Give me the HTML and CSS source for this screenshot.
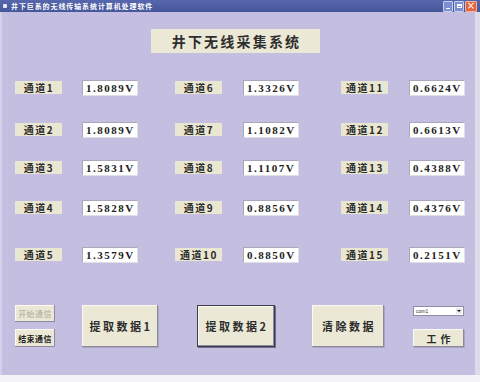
FILE: index.html
```html
<!DOCTYPE html>
<html lang="zh">
<head>
<meta charset="utf-8">
<link rel="stylesheet" href="styles.css">
</head>
<body>
<div class="window">
  <div class="titlebar">
    <span class="ticon"></span>
    <span class="ttext">井下巨系的无线传输系统计算机处理软件</span>
    <div class="wbtns">
      <span class="wb min"><span class="minbar"></span></span>
      <span class="wb max"><span class="maxbox"></span></span>
      <span class="wb close">×</span>
    </div>
  </div>
  <div class="client">
    <div class="heading">井下无线采集系统</div>
    <div class="grid">
      <div class="lbl">通道1</div><div class="val">1.8089V</div>
      <div class="lbl">通道6</div><div class="val">1.3326V</div>
      <div class="lbl">通道11</div><div class="val">0.6624V</div>

      <div class="lbl">通道2</div><div class="val">1.8089V</div>
      <div class="lbl">通道7</div><div class="val">1.1082V</div>
      <div class="lbl">通道12</div><div class="val">0.6613V</div>

      <div class="lbl">通道3</div><div class="val">1.5831V</div>
      <div class="lbl">通道8</div><div class="val">1.1107V</div>
      <div class="lbl">通道13</div><div class="val">0.4388V</div>

      <div class="lbl">通道4</div><div class="val">1.5828V</div>
      <div class="lbl">通道9</div><div class="val">0.8856V</div>
      <div class="lbl">通道14</div><div class="val">0.4376V</div>

      <div class="lbl">通道5</div><div class="val">1.3579V</div>
      <div class="lbl">通道10</div><div class="val">0.8850V</div>
      <div class="lbl">通道15</div><div class="val">0.2151V</div>
    </div>
    <div class="controls">
      <div class="smallcol">
        <div class="sbtn disabled">开始通信</div>
        <div class="sbtn">结束通信</div>
      </div>
      <div class="bigbtn b1">提取数据1</div>
      <div class="bigbtn b2 focused">提取数据2</div>
      <div class="bigbtn b3">清除数据</div>
      <div class="rightcol">
        <div class="combo"><span class="ctext">com1</span><span class="carrow"></span></div>
        <div class="workbtn">工作</div>
      </div>
    </div>
  </div>
</div>
</body>
</html>
```
FILE: styles.css
```css
* { box-sizing: border-box; }
html, body { margin: 0; padding: 0; background: #f4f3f6; }
body { font-family: "Noto Sans CJK SC", "Noto Sans", sans-serif; }

.window { width: 480px; height: 375px; display: flex; flex-direction: column; }

.titlebar {
  height: 12px;
  background: linear-gradient(#5667ad, #44559a);
  display: flex;
  align-items: center;
  padding-left: 3px;
  color: #fff;
}
.ticon { width: 4px; height: 4px; background: #e8e8f0; border-radius: 1px; margin-right: 4px; }
.ttext { font-size: 7px; font-weight: 700; letter-spacing: 0.9px; line-height: 1; }
.wbtns { margin-left: auto; display: flex; gap: 1px; padding-right: 3px; height: 11px; }
.wb {
  width: 10px; height: 11px; background: #7d8fd0; border: 1px solid #c9d1f0; border-radius: 1px;
  display: flex; align-items: center; justify-content: center;
}
.minbar { width: 4px; height: 1px; background: #fff; margin-top: 5px; }
.maxbox { width: 5px; height: 4px; border: 1px solid #fff; border-top-width: 2px; }
.wb.close { width: 12px; background: #e4643c; border-color: #f2b49a; font-size: 10px; line-height: 1; color: #fff; font-family: "DejaVu Sans", sans-serif; }

.client {
  flex: 1;
  background: #c4bfe1;
  box-shadow: inset 2px 0 0 #d4d1ea, inset -5px 0 0 #dddbea;
  padding-top: 17px;
}

.heading {
  margin-left: 151px;
  width: 169px; height: 24px;
  background: #ebe9d5;
  color: #2e2e2e;
  font-size: 14px; font-weight: 700; letter-spacing: 2.2px;
  display: flex; align-items: center; justify-content: center;
  padding-left: 2px;
}

.grid {
  margin-top: 27px;
  padding-left: 15px;
  display: grid;
  grid-template-columns: 67px 93px 68px 98px 68px 55px;
  grid-template-rows: 42px 38px 40px 47px 16px;
  align-items: start;
}
.lbl {
  width: 47px; height: 13px; margin-top: 1px;
  background: #e9e6d1;
  color: #2a2a2a;
  font-size: 10px; font-weight: 700; letter-spacing: 1.6px; line-height: 13px;
  text-align: center; padding-left: 1px;
}
.val {
  width: 56px; height: 16px;
  background: #fff;
  border: 1px solid #a9a7b9;
  border-right-color: #e0dfe8; border-bottom-color: #e0dfe8;
  font-family: "Liberation Serif", serif; font-weight: 700;
  font-size: 11px; letter-spacing: 1.5px; line-height: 14px;
  color: #222; padding-left: 3px;
}

.controls {
  margin-top: 42px;
  padding-left: 15px;
  display: flex;
  align-items: flex-start;
}
.smallcol { width: 40px; display: flex; flex-direction: column; gap: 7px; margin-right: 27px; }
.sbtn {
  width: 40px; height: 17px;
  background: #ebe9d6;
  box-shadow: inset -1px -1px 0 #8d8aa0, inset 1px 1px 0 #fbfaf2;
  font-size: 8px; font-weight: 700; letter-spacing: 0.4px;
  display: flex; align-items: center; justify-content: center; color: #1e1e1e;
}
.sbtn.disabled { color: #bdbbad; }
.sbtn + .sbtn { height: 18px; }

.bigbtn {
  height: 42px;
  background: #ebe9d6;
  box-shadow: inset -1px -1px 0 #8d8aa0, inset 1px 1px 0 #fbfaf2, 1px 1px 0 #a9a5c3;
  font-size: 11px; font-weight: 700; letter-spacing: 2.5px; color: #2c2c2c;
  display: flex; align-items: center; justify-content: center; padding-left: 2px;
}
.b1 { width: 76px; margin-right: 39px; }
.b2 { width: 78px; margin-right: 37px; }
.b3 { width: 72px; margin-right: 29px; }
.bigbtn.focused {
  border: 1px solid #3d3b50;
  box-shadow: inset -1px -1px 0 #8d8aa0, inset 1px 1px 0 #fbfaf2, 1px 1px 0 #6e6b85;
}

.rightcol { width: 51px; display: flex; flex-direction: column; }
.combo {
  margin-top: 1px;
  height: 10px; background: #fff;
  border: 1px solid #8e8ca4;
  display: flex; align-items: center; justify-content: space-between;
  padding: 0 1px 0 2px;
}
.ctext { font-family: "Liberation Sans", sans-serif; font-size: 5px; color: #333; line-height: 1; }
.carrow { width: 6px; height: 6px; background: #e8e8ee; position: relative; }
.carrow::after {
  content: ""; position: absolute; left: 1px; top: 2px;
  border-left: 2px solid transparent; border-right: 2px solid transparent; border-top: 2px solid #111;
}
.workbtn {
  margin-top: 13px;
  height: 18px;
  background: #ebe9d6;
  box-shadow: inset -1px -1px 0 #8d8aa0, inset 1px 1px 0 #fbfaf2, 1px 1px 0 #a9a5c3;
  font-size: 10px; font-weight: 700; letter-spacing: 4px; color: #2a2a2a;
  display: flex; align-items: center; justify-content: center; padding-left: 4px;
}
```
